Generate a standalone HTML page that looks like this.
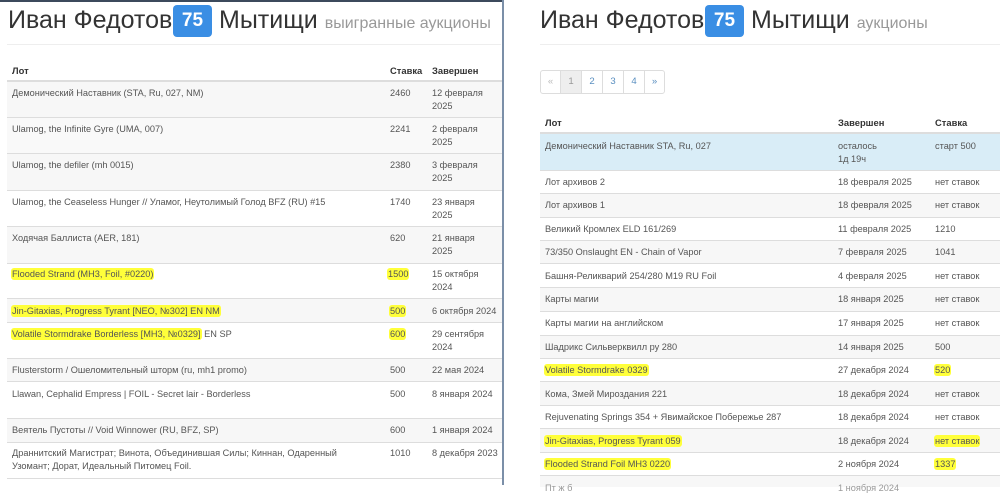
<!DOCTYPE html>
<html><head><meta charset="utf-8"><style>
*{margin:0;padding:0;box-sizing:border-box}
body{width:1000px;height:485px;overflow:hidden;background:#fff;font-family:"Liberation Sans","DejaVu Sans",sans-serif;color:#555;position:relative}
.a{position:absolute;white-space:nowrap}
.t{font-size:25px;color:#333;top:4px;line-height:32px}
.sub{font-size:16px;color:#999}
.badge{position:absolute;top:5px;width:39px;height:32px;background:#3a8ee4;border-radius:4px;color:#fff;font-weight:bold;font-size:19px;text-align:center;line-height:32px}
.row{position:absolute;border-top:1px solid #ddd}
.g{background:#f7f7f7}
.c{position:absolute;font-size:9.2px;line-height:13px;white-space:nowrap;margin-top:1px}
.h{font-weight:bold;color:#333;font-size:9.4px}
.y{background:#ffff3a;border-radius:3px;padding:1px 1px;margin-left:-1px}
.pg{position:absolute;top:70px;height:24px;border:1px solid #ddd;font-size:9.6px;color:#5a8fc0;line-height:22px;text-align:center}
</style></head><body>
<div class="a" style="left:0;top:0;width:503px;height:2px;background:#3c4a5c"></div>
<div class="a" style="left:502px;top:0;width:2px;height:485px;background:#7b8fa8"></div>

<!-- LEFT -->
<div class="a t" style="left:8px">Иван Федотов</div>
<div class="badge" style="left:173px">75</div>
<div class="a t" style="left:219px">Мытищи <span class="sub">выигранные аукционы</span></div>
<div class="a" style="left:7px;top:44px;width:494px;height:1px;background:#eee"></div>
<div class="c h" style="left:12px;top:63px">Лот</div>
<div class="c h" style="left:390px;top:63px">Ставка</div>
<div class="c h" style="left:432px;top:63px">Завершен</div>
<div class="a" style="left:7px;top:80px;width:495px;height:2px;background:#ddd"></div>

<div class="row g" style="left:7px;top:81px;width:495px;height:36px"></div>
<div class="row" style="left:7px;top:117px;width:495px;height:36px;background:#f9f9f9"></div>
<div class="row g" style="left:7px;top:153px;width:495px;height:37px"></div>
<div class="row" style="left:7px;top:190px;width:495px;height:36px"></div>
<div class="row g" style="left:7px;top:226px;width:495px;height:37px"></div>
<div class="row" style="left:7px;top:263px;width:495px;height:35px"></div>
<div class="row g" style="left:7px;top:298px;width:495px;height:24px"></div>
<div class="row" style="left:7px;top:322px;width:495px;height:36px"></div>
<div class="row g" style="left:7px;top:358px;width:495px;height:23px"></div>
<div class="row" style="left:7px;top:381px;width:495px;height:37px"></div>
<div class="row g" style="left:7px;top:418px;width:495px;height:24px"></div>
<div class="row" style="left:7px;top:442px;width:495px;height:36px"></div>
<div class="row" style="left:7px;top:478px;width:495px;height:10px"></div>

<div class="c" style="left:12px;top:86px">Демонический Наставник (STA, Ru, 027, NM)</div><div class="c" style="left:390px;top:86px">2460</div><div class="c" style="left:432px;top:86px">12 февраля<br>2025</div>
<div class="c" style="left:12px;top:122px">Ulamog, the Infinite Gyre (UMA, 007)</div><div class="c" style="left:390px;top:122px">2241</div><div class="c" style="left:432px;top:122px">2 февраля<br>2025</div>
<div class="c" style="left:12px;top:158px">Ulamog, the defiler (mh 0015)</div><div class="c" style="left:390px;top:158px">2380</div><div class="c" style="left:432px;top:158px">3 февраля<br>2025</div>
<div class="c" style="left:12px;top:195px">Ulamog, the Ceaseless Hunger // Уламог, Неутолимый Голод BFZ (RU) #15</div><div class="c" style="left:390px;top:195px">1740</div><div class="c" style="left:432px;top:195px">23 января<br>2025</div>
<div class="c" style="left:12px;top:231px">Ходячая Баллиста (AER, 181)</div><div class="c" style="left:390px;top:231px">620</div><div class="c" style="left:432px;top:231px">21 января<br>2025</div>
<div class="c" style="left:12px;top:267px"><span class="y">Flooded Strand (MH3, Foil, #0220)</span></div><div class="c" style="left:388px;top:267px"><span class="y">1500</span></div><div class="c" style="left:432px;top:267px">15 октября<br>2024</div>
<div class="c" style="left:12px;top:304px"><span class="y">Jin-Gitaxias, Progress Tyrant [NEO, №302] EN NM</span></div><div class="c" style="left:390px;top:304px"><span class="y">500</span></div><div class="c" style="left:432px;top:304px">6 октября 2024</div>
<div class="c" style="left:12px;top:327px"><span class="y">Volatile Stormdrake Borderless [MH3, №0329]</span> EN SP</div><div class="c" style="left:390px;top:327px"><span class="y">600</span></div><div class="c" style="left:432px;top:327px">29 сентября<br>2024</div>
<div class="c" style="left:12px;top:363px">Flusterstorm / Ошеломительный шторм (ru, mh1 promo)</div><div class="c" style="left:390px;top:363px">500</div><div class="c" style="left:432px;top:363px">22 мая 2024</div>
<div class="c" style="left:12px;top:387px">Llawan, Cephalid Empress | FOIL - Secret lair - Borderless</div><div class="c" style="left:390px;top:387px">500</div><div class="c" style="left:432px;top:387px">8 января 2024</div>
<div class="c" style="left:12px;top:423px">Веятель Пустоты // Void Winnower (RU, BFZ, SP)</div><div class="c" style="left:390px;top:423px">600</div><div class="c" style="left:432px;top:423px">1 января 2024</div>
<div class="c" style="left:12px;top:446px">Драннитский Магистрат; Винота, Объединившая Силы; Киннан, Одаренный<br>Узомант; Дорат, Идеальный Питомец Foil.</div><div class="c" style="left:390px;top:446px">1010</div><div class="c" style="left:432px;top:446px">8 декабря 2023</div>

<!-- RIGHT -->
<div class="a t" style="left:540px">Иван Федотов</div>
<div class="badge" style="left:705px">75</div>
<div class="a t" style="left:751px">Мытищи <span class="sub">аукционы</span></div>
<div class="a" style="left:540px;top:44px;width:460px;height:1px;background:#eee"></div>
<div class="pg" style="left:540px;width:21px;color:#bbb;border-radius:3px 0 0 3px">«</div>
<div class="pg" style="left:560px;width:22px;background:#eee;color:#999">1</div>
<div class="pg" style="left:581px;width:22px">2</div>
<div class="pg" style="left:602px;width:22px">3</div>
<div class="pg" style="left:623px;width:22px">4</div>
<div class="pg" style="left:644px;width:21px;border-radius:0 3px 3px 0">»</div>
<div class="c h" style="left:545px;top:115px">Лот</div>
<div class="c h" style="left:838px;top:115px">Завершен</div>
<div class="c h" style="left:935px;top:115px">Ставка</div>
<div class="a" style="left:540px;top:132px;width:460px;height:2px;background:#ddd"></div>
<div class="row" style="left:540px;top:133px;width:460px;height:37px;background:#d9edf7"></div>
<div class="row" style="left:540px;top:170px;width:460px;height:23px"></div>
<div class="row g" style="left:540px;top:193px;width:460px;height:24px"></div>
<div class="row" style="left:540px;top:217px;width:460px;height:23px"></div>
<div class="row g" style="left:540px;top:240px;width:460px;height:23px"></div>
<div class="row" style="left:540px;top:263px;width:460px;height:24px"></div>
<div class="row g" style="left:540px;top:287px;width:460px;height:24px"></div>
<div class="row" style="left:540px;top:311px;width:460px;height:24px"></div>
<div class="row g" style="left:540px;top:335px;width:460px;height:23px"></div>
<div class="row" style="left:540px;top:358px;width:460px;height:23px"></div>
<div class="row g" style="left:540px;top:381px;width:460px;height:24px"></div>
<div class="row" style="left:540px;top:405px;width:460px;height:23px"></div>
<div class="row g" style="left:540px;top:428px;width:460px;height:24px"></div>
<div class="row" style="left:540px;top:452px;width:460px;height:23px"></div>
<div class="row g" style="left:540px;top:475px;width:460px;height:12px"></div>

<div class="c" style="left:545px;top:139px">Демонический Наставник STA, Ru, 027</div><div class="c" style="left:838px;top:139px">осталось<br>1д 19ч</div><div class="c" style="left:935px;top:139px">старт 500</div>
<div class="c" style="left:545px;top:175px">Лот архивов 2</div><div class="c" style="left:838px;top:175px">18 февраля 2025</div><div class="c" style="left:935px;top:175px">нет ставок</div>
<div class="c" style="left:545px;top:198px">Лот архивов 1</div><div class="c" style="left:838px;top:198px">18 февраля 2025</div><div class="c" style="left:935px;top:198px">нет ставок</div>
<div class="c" style="left:545px;top:222px">Великий Кромлех ELD 161/269</div><div class="c" style="left:838px;top:222px">11 февраля 2025</div><div class="c" style="left:935px;top:222px">1210</div>
<div class="c" style="left:545px;top:245px">73/350 Onslaught EN - Chain of Vapor</div><div class="c" style="left:838px;top:245px">7 февраля 2025</div><div class="c" style="left:935px;top:245px">1041</div>
<div class="c" style="left:545px;top:269px">Башня-Реликварий 254/280 M19 RU Foil</div><div class="c" style="left:838px;top:269px">4 февраля 2025</div><div class="c" style="left:935px;top:269px">нет ставок</div>
<div class="c" style="left:545px;top:292px">Карты магии</div><div class="c" style="left:838px;top:292px">18 января 2025</div><div class="c" style="left:935px;top:292px">нет ставок</div>
<div class="c" style="left:545px;top:316px">Карты магии на английском</div><div class="c" style="left:838px;top:316px">17 января 2025</div><div class="c" style="left:935px;top:316px">нет ставок</div>
<div class="c" style="left:545px;top:340px">Шадрикс Сильверквилл ру 280</div><div class="c" style="left:838px;top:340px">14 января 2025</div><div class="c" style="left:935px;top:340px">500</div>
<div class="c" style="left:545px;top:363px"><span class="y">Volatile Stormdrake 0329</span></div><div class="c" style="left:838px;top:363px">27 декабря 2024</div><div class="c" style="left:935px;top:363px"><span class="y">520</span></div>
<div class="c" style="left:545px;top:387px">Кома, Змей Мироздания 221</div><div class="c" style="left:838px;top:387px">18 декабря 2024</div><div class="c" style="left:935px;top:387px">нет ставок</div>
<div class="c" style="left:545px;top:410px">Rejuvenating Springs 354 + Явимайское Побережье 287</div><div class="c" style="left:838px;top:410px">18 декабря 2024</div><div class="c" style="left:935px;top:410px">нет ставок</div>
<div class="c" style="left:545px;top:434px"><span class="y">Jin-Gitaxias, Progress Tyrant 059</span></div><div class="c" style="left:838px;top:434px">18 декабря 2024</div><div class="c" style="left:935px;top:434px"><span class="y">нет ставок</span></div>
<div class="c" style="left:545px;top:457px"><span class="y">Flooded Strand Foil MH3 0220</span></div><div class="c" style="left:838px;top:457px">2 ноября 2024</div><div class="c" style="left:935px;top:457px"><span class="y">1337</span></div>
<div class="c" style="left:545px;top:481px;color:#999">Пт ж б</div><div class="c" style="left:838px;top:481px;color:#999">1 ноября 2024</div>
</body></html>
